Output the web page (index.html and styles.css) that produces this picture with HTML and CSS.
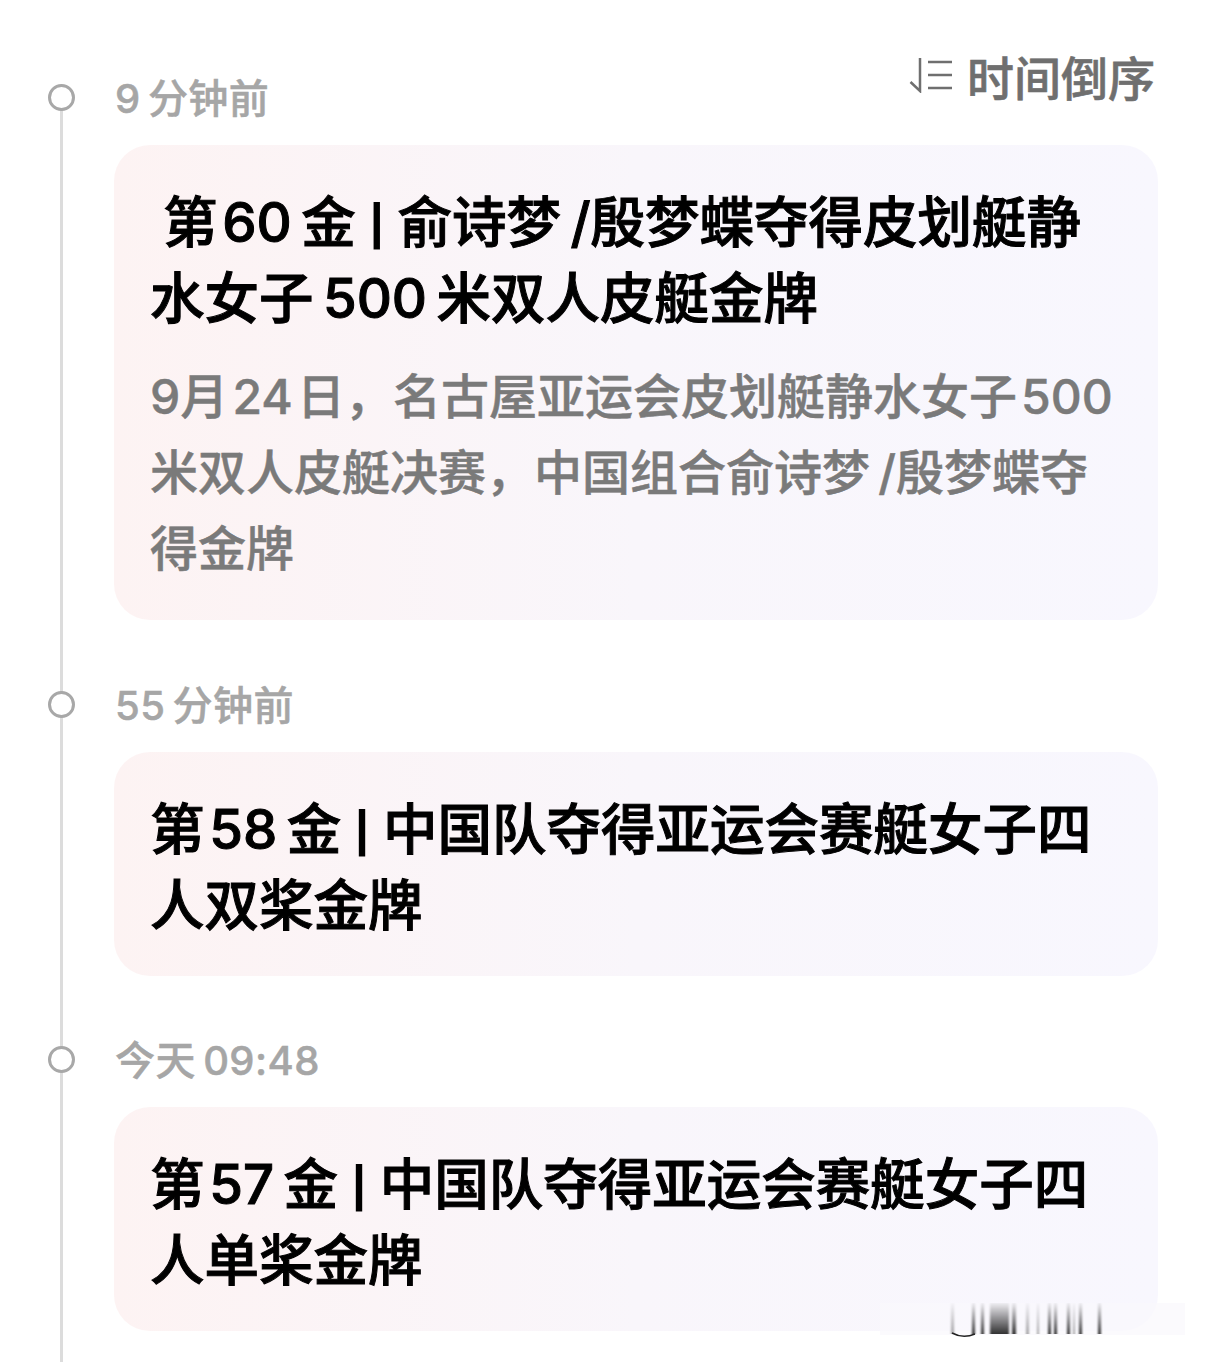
FILE: index.html
```html
<!DOCTYPE html>
<html lang="zh">
  <head>
    <meta charset="utf-8" />
    <link rel="stylesheet" href="styles.css">
  </head>
  <body>
    <div class="timeline">
      <div class="item item-first">
        <div class="rail"><span class="dot"></span></div>
        <div class="content">
          <div class="label-row">
            <span class="time">9&#8201;分钟前</span>
            <div class="sort">
              <svg class="sort-icon" width="44" height="36" viewBox="0 0 44 36" fill="none" stroke="#6f6f6f" stroke-width="2.5">
                <path d="M11 1V34L1.500 25" />
                <path d="M19 5H43M19 18H43M19 31H43" />
              </svg>
              <span>时间倒序</span>
            </div>
          </div>
          <div class="card">
            <h3 class="title title-indent">第&#8202;60&#8202;&#8202;金<span class="sep"> | </span>俞诗梦&#8201;/殷梦蝶夺得皮划艇静<br>水女子&#8201;500&#8202;&#8202;米双人皮艇金牌</h3>
            <p class="desc">9月&#8202;24&#8202;日，名古屋亚运会皮划艇静水女子&#8202;500<br>米双人皮艇决赛，中国组合俞诗梦&#8201;/殷梦蝶夺<br>得金牌</p>
          </div>
        </div>
      </div>

      <div class="item item-middle">
        <div class="rail"><span class="dot"></span></div>
        <div class="content">
          <div class="label-row">
            <span class="time">55&#8201;分钟前</span>
          </div>
          <div class="card">
            <h3 class="title">第&#8202;58&#8202;&#8202;金<span class="sep"> | </span>中国队夺得亚运会赛艇女子四<br>人双桨金牌</h3>
          </div>
        </div>
      </div>

      <div class="item item-last">
        <div class="rail"><span class="dot"></span></div>
        <div class="content">
          <div class="label-row">
            <span class="time">今天&#8201;09:48</span>
          </div>
          <div class="card">
            <h3 class="title">第&#8202;57&#8202;&#8202;金<span class="sep"> | </span>中国队夺得亚运会赛艇女子四<br>人单桨金牌</h3>
          </div>
        </div>
      </div>
    </div>

    <!-- smeared watermark, bottom right -->
    <svg class="smear" width="320" height="40" viewBox="0 0 320 40">
      <defs>
        <linearGradient id="fade" x1="0" y1="0" x2="0" y2="1">
          <stop offset="0" stop-color="#000" stop-opacity="0.04" />
          <stop offset="1" stop-color="#000" stop-opacity="0.8" />
        </linearGradient>
        <linearGradient id="faint" x1="0" y1="0" x2="0" y2="1">
          <stop offset="0" stop-color="#000" stop-opacity="0.02" />
          <stop offset="1" stop-color="#000" stop-opacity="0.35" />
        </linearGradient>
        <filter id="smudge" x="-5%" y="0" width="110%" height="100%">
          <feGaussianBlur stdDeviation="0.8 0" />
        </filter>
      </defs>
      <rect x="0" y="3" width="305" height="32" fill="#f9f8fc" opacity="0.75" />
      <g filter="url(#smudge)">
        <g fill="url(#faint)">
          <rect x="71" y="3" width="3" height="31" />
          <rect x="146" y="3" width="3" height="31" />
          <rect x="157" y="3" width="2" height="31" />
          <rect x="193" y="3" width="2" height="31" />
        </g>
        <g fill="url(#fade)">
          <rect x="92" y="3" width="3" height="31" />
          <rect x="101" y="3" width="3" height="31" />
          <rect x="110" y="3" width="19" height="31" />
          <rect x="132" y="3" width="4" height="31" />
          <rect x="168" y="3" width="3" height="31" />
          <rect x="174" y="3" width="3" height="31" />
          <rect x="187" y="3" width="3" height="31" />
          <rect x="199" y="3" width="3" height="31" />
          <rect x="218" y="3" width="3" height="31" />
        </g>
      </g>
      <path d="M72 33Q83 39 95 34" fill="none" stroke="#222" stroke-width="1.500" />
    </svg>
  </body>
</html>
```

FILE: styles.css
```css
html,
body {
  height: 100%;
}

body {
  position: relative;
  margin: 0;
  overflow: hidden;
  background: #fff;
  font-family: Inter, "Noto Sans CJK SC", sans-serif;
}

.timeline {
  height: 100%;
  padding: 76px 48px 0;
  box-sizing: border-box;
  display: flex;
  flex-direction: column;
}

.item {
  display: flex;
  gap: 39px;
}

.item-last {
  flex: 1;
}

.rail {
  position: relative;
  width: 27px;
  flex-shrink: 0;
}

.rail::before {
  content: "";
  position: absolute;
  top: 0;
  bottom: 0;
  left: 12px;
  width: 3px;
  background: #dcdcdc;
}

.item-first .rail::before {
  top: 20px;
}

.dot {
  position: relative;
  display: block;
  width: 27px;
  height: 27px;
  margin-top: 8px;
  box-sizing: border-box;
  border: 3px solid #a8a8a8;
  border-radius: 50%;
  background: #fff;
}

.content {
  flex: 1;
  min-width: 0;
  padding-bottom: 63px;
}

.item-middle .content {
  padding-bottom: 62px;
}

.label-row {
  display: flex;
  justify-content: space-between;
  height: 46px;
  margin-bottom: 23px;
}

.time {
  padding-left: 1px;
  color: #a6a6a6;
  font-size: 40px;
  font-weight: 500;
  line-height: 46px;
  letter-spacing: 0.4px;
  -webkit-text-stroke: 0.5px #a6a6a6;
}

.sort {
  display: flex;
  align-items: center;
  gap: 14px;
  height: 50px;
  margin-top: -26px;
  margin-right: 3px;
  color: #6f6f6f;
  font-size: 47px;
  font-weight: 500;
  -webkit-text-stroke: 0.6px #6f6f6f;
}

.card {
  padding: 39px 38px 33px 36px;
  border-radius: 36px;
  background: linear-gradient(90deg, #fdf3f3 0%, #f9f6fb 50%, #f8f7fe 100%);
}

.title {
  margin: 0;
  color: #000;
  font-size: 54.5px;
  font-weight: 500;
  line-height: 76px;
  -webkit-text-stroke: 1px #000;
}

.title-indent {
  text-indent: 13px;
}

.sep {
  font-family: "Liberation Sans", sans-serif;
  font-size: 50px;
  font-weight: 700;
  line-height: 0;
  vertical-align: 4px;
  -webkit-text-stroke: 0;
}

.desc {
  margin: 23px 0 0;
  color: #7a7a7a;
  font-size: 48px;
  font-weight: 500;
  line-height: 76px;
  -webkit-text-stroke: 0.5px #7a7a7a;
}

.smear {
  position: absolute;
  left: 880px;
  top: 1300px;
}
```
